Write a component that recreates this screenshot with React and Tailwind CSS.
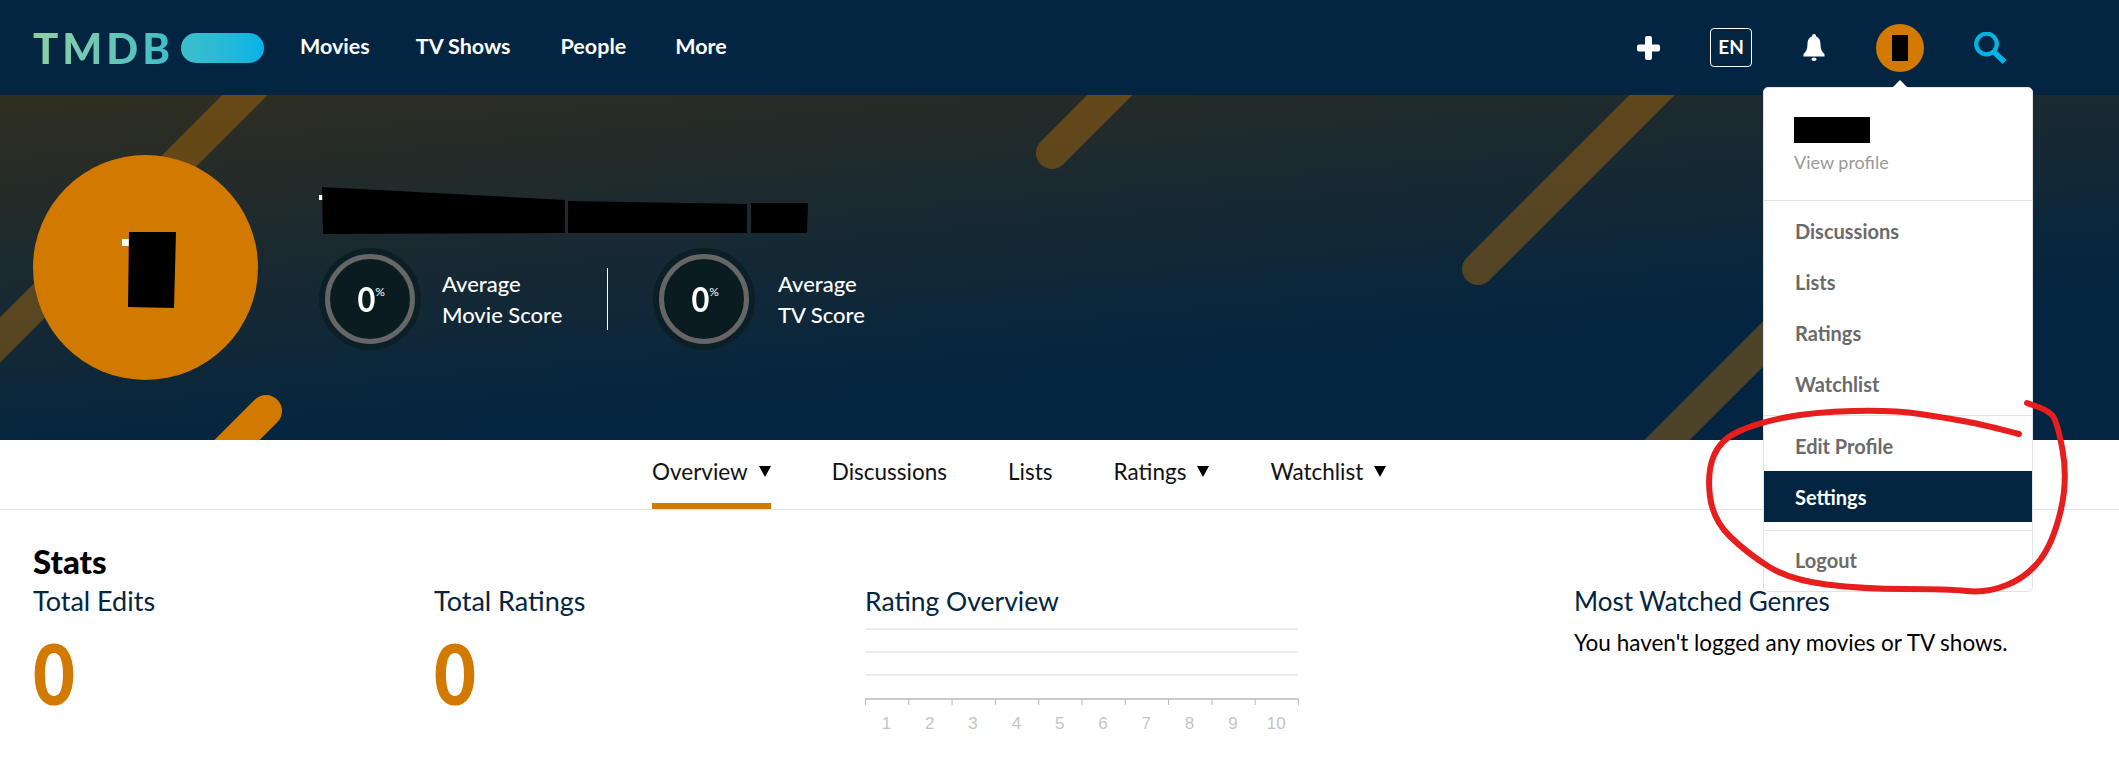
const font = { fontFamily: '"Lato", "Noto Sans", sans-serif' };

// freehand circle over the menu
const scribble = [
  [2019, 434], [1985, 425], [1947, 418], [1893, 410], [1813, 412], [1757, 423], [1720, 440], [1707, 473],
  [1713, 520], [1747, 553], [1790, 580], [1863, 589], [1947, 589], [1987, 593], [2027, 577], [2053, 543],
  [2068, 480], [2057, 420], [2047, 410], [2027, 403],
];

function smooth(pts) {
  let d = `M${pts[0][0]} ${pts[0][1]}`;
  for (let i = 1; i < pts.length - 1; i++) {
    const mx = (pts[i][0] + pts[i + 1][0]) / 2;
    const my = (pts[i][1] + pts[i + 1][1]) / 2;
    d += ` Q${pts[i][0]} ${pts[i][1]} ${mx} ${my}`;
  }
  const last = pts[pts.length - 1];
  return d + ` L${last[0]} ${last[1]}`;
}

function HeroStripes() {
  return (
    <svg className="absolute inset-0" width="2119" height="345" viewBox="0 95 2119 345">
      <g stroke="#d27900" strokeOpacity="0.36" strokeWidth="32" strokeLinecap="round" fill="none">
        <line x1="275" y1="65" x2="-30" y2="370" />
        <line x1="1140" y1="65" x2="1052" y2="153" />
        <line x1="1682" y1="65" x2="1478" y2="269" />
        <line x1="1900" y1="207" x2="1620" y2="487" />
      </g>
      <line x1="2045" y1="70" x2="2015" y2="100" stroke="#d27900" strokeWidth="12" />
      <line x1="266" y1="411" x2="220" y2="457" stroke="#d27900" strokeWidth="32" strokeLinecap="round" />
    </svg>
  );
}

function ScoreBadge() {
  return (
    <div className="h-[102px] w-[102px] shrink-0 rounded-full bg-[#0c1f26] p-[6px]">
      <div className="flex h-full w-full items-center justify-center rounded-full border-[5px] border-[#666666] bg-[#0b1c21] text-white">
        <span className="origin-right scale-x-[0.88] text-[35px] leading-none font-bold">0</span>
        <span className="mb-[14px] text-[12px] leading-none">%</span>
      </div>
    </div>
  );
}

function ScoreLabel({ a, b, className }) {
  return (
    <div className={`text-[22px] leading-[31px] font-medium text-white ${className}`}>
      <div>{a}</div>
      <div>{b}</div>
    </div>
  );
}

function Caret() {
  return <span className="mb-[2px] ml-[11px] h-0 w-0 border-x-[6px] border-t-[11px] border-x-transparent border-t-black" />;
}

function Tab({ label, caret, active }) {
  return (
    <div className={`flex h-[69px] items-center pt-[1px] ${active ? "border-b-[6px] border-[#d27900]" : "pb-[6px]"}`}>
      <span>{label}</span>
      {caret && <Caret />}
    </div>
  );
}

function MenuItem({ label, active }) {
  return (
    <div
      className={`flex h-[51px] items-center pl-[31px] text-[20px] font-bold ${
        active ? "bg-[#032541] text-white" : "text-[#6a6a6a]"
      }`}
    >
      {label}
    </div>
  );
}

function Menu() {
  return (
    <div className="absolute top-[87px] right-[86px] w-[270px] rounded-[5px] border border-[#e3e3e3] bg-white">
      <div className="absolute -top-[8px] left-[128px] h-0 w-0 border-x-[8px] border-b-[8px] border-x-transparent border-b-white" />
      <div className="h-[112px] pt-[29px] pl-[30px]">
        <div className="h-[26px] w-[76px] bg-black" />
        <div className="mt-[7px] text-[18px] leading-[24px] text-[#999999]">View profile</div>
      </div>
      <div className="h-[215px] border-t border-[#e3e3e3] pt-[4px]">
        <MenuItem label="Discussions" />
        <MenuItem label="Lists" />
        <MenuItem label="Ratings" />
        <MenuItem label="Watchlist" />
      </div>
      <div className="border-t border-[#e3e3e3] pt-[4px] pb-[8px]">
        <MenuItem label="Edit Profile" />
        <MenuItem label="Settings" active />
      </div>
      <div className="h-[61px] border-t border-[#e3e3e3] pt-[3px]">
        <MenuItem label="Logout" />
      </div>
    </div>
  );
}

function Nav() {
  return (
    <div className="flex h-[95px] items-center bg-[#032541] pr-[112px] pl-[33px]">
      <span className="w-[136px] bg-gradient-to-r from-[#90cea1] to-[#3cbec9] bg-clip-text text-[42px] leading-none font-black tracking-[4px] text-transparent">
        TMDB
      </span>
      <div className="ml-[12px] h-[30px] w-[83px] rounded-full bg-gradient-to-r from-[#3cbec9] to-[#00b3e5]" />
      <div className="ml-[36px] flex items-center gap-[46px] pb-[2px] text-[21.5px] font-bold text-white">
        <span>Movies</span>
        <span>TV Shows</span>
        <span className="ml-[4px]">People</span>
        <span className="ml-[3px]">More</span>
      </div>
      <div className="ml-auto flex items-center gap-[51px]">
        <svg className="-mr-[1px]" width="23" height="24" viewBox="0 0 23 24" fill="white">
          <rect x="8" y="0" width="7" height="24" rx="2" />
          <rect x="0" y="8.5" width="23" height="7" rx="2" />
        </svg>
        <div className="flex h-[39px] w-[42px] items-center justify-center rounded-[4px] border border-white text-[19px] font-bold text-white">
          EN
        </div>
        <svg width="22" height="27" viewBox="0 0 22 27" fill="white">
          <circle cx="11" cy="2" r="2" />
          <path d="M11 2C6.5 2 4.5 6 4.5 10C4.5 15 3 18 0.5 20V22.5H21.5V20C19 18 17.5 15 17.5 10C17.5 6 15.5 2 11 2Z" />
          <ellipse cx="11" cy="25.3" rx="2.6" ry="1.7" />
        </svg>
        <div className="-mr-[1px] flex h-[48px] w-[48px] items-center justify-center rounded-full bg-[#d27900]">
          <div className="h-[26px] w-[16px] bg-black" />
        </div>
        <svg width="33" height="32" viewBox="0 0 33 32" fill="none" stroke="#01b4e4">
          <circle cx="12.5" cy="12" r="10.3" strokeWidth="4.2" />
          <line x1="20" y1="20" x2="30.5" y2="30" strokeWidth="5.5" />
        </svg>
      </div>
    </div>
  );
}

function Hero() {
  return (
    <div className="relative flex h-[345px] items-center overflow-hidden bg-[linear-gradient(175deg,#302e20_0%,#032541_72%)] pl-[33px]">
      <HeroStripes />
      <div className="relative flex h-[225px] w-[225px] shrink-0 items-center justify-center rounded-full bg-[#d27900]">
        <svg className="mt-[5px] ml-[7px]" width="54" height="76" viewBox="122 232 54 76">
          <rect x="122" y="239" width="8" height="7" fill="white" />
          <polygon points="129,232 176,232 174,308 128,307" fill="black" />
        </svg>
      </div>
      <div className="relative ml-[61px] pt-[1px]">
        <svg className="block" width="490" height="47" viewBox="319 187 490 47">
          <rect x="319" y="195" width="4" height="5" fill="white" />
          <polygon points="322,187 565,200 565,233 323,234" fill="black" />
          <polygon points="568,201 747,204 747,233 568,233" fill="black" />
          <polygon points="751,203 808,203 807,233 751,233" fill="black" />
        </svg>
        <div className="mt-[14px] flex items-center">
          <ScoreBadge />
          <ScoreLabel a="Average" b="Movie Score" className="ml-[21px] w-[165px]" />
          <div className="h-[62px] w-px bg-white" />
          <div className="ml-[45px]">
            <ScoreBadge />
          </div>
          <ScoreLabel a="Average" b="TV Score" className="ml-[23px]" />
        </div>
      </div>
    </div>
  );
}

function Tabs() {
  return (
    <div className="flex h-[70px] gap-[61px] border-b-[1px] border-[#e3e3e3] pl-[652px] text-[22.5px] text-[#111111]">
      <Tab label="Overview" caret active />
      <Tab label="Discussions" />
      <Tab label="Lists" />
      <Tab label="Ratings" caret />
      <Tab label="Watchlist" caret />
    </div>
  );
}

function Total({ title, width }) {
  return (
    <div style={{ width }} className="shrink-0">
      <div className="text-[27px] leading-[40px] text-[#032541]">{title}</div>
      <div className="mt-[7px] origin-left scale-x-[0.86] text-[84px] leading-[90px] font-black text-[#d27900]">0</div>
    </div>
  );
}

function RatingChart() {
  const ticks = Array.from({ length: 11 }, (_, i) => 0.5 + i * 43.3);
  return (
    <svg className="mt-[3px] block" width="434" height="110" viewBox="0 0 434 110">
      {[5, 28, 51].map((y) => (
        <line key={y} x1="0" y1={y} x2="433" y2={y} stroke="#e6e6e6" strokeWidth="1.5" />
      ))}
      <line x1="0" y1="75" x2="433.5" y2="75" stroke="#b8b8b8" strokeWidth="1.5" />
      {ticks.map((x) => (
        <line key={x} x1={x} y1="75" x2={x} y2="81" stroke="#b8b8b8" />
      ))}
      {ticks.slice(0, 10).map((x, i) => (
        <text
          key={x}
          x={x + 21}
          y="105"
          textAnchor="middle"
          fill="#c4c4c4"
          fontSize="17"
          fontFamily='"Liberation Sans", sans-serif'
        >
          {i + 1}
        </text>
      ))}
    </svg>
  );
}

function Stats() {
  return (
    <div className="pt-[31px] pl-[33px]">
      <div className="text-[33px] leading-[40px] font-black text-black">Stats</div>
      <div className="flex">
        <Total title="Total Edits" width={401} />
        <Total title="Total Ratings" width={431} />
        <div className="w-[709px] shrink-0">
          <div className="text-[26.5px] leading-[40px] text-[#032541]">Rating Overview</div>
          <RatingChart />
        </div>
        <div>
          <div className="text-[26px] leading-[40px] text-[#032541]">Most Watched Genres</div>
          <div className="mt-[2px] text-[22.5px] leading-[40px] text-black">You haven't logged any movies or TV shows.</div>
        </div>
      </div>
    </div>
  );
}

export default function App() {
  return (
    <div style={font} className="relative h-[760px] overflow-hidden bg-white">
      <Nav />
      <Hero />
      <Tabs />
      <Stats />
      <Menu />
      <svg className="pointer-events-none absolute inset-0" width="2119" height="760" viewBox="0 0 2119 760">
        <path d={smooth(scribble)} fill="none" stroke="#e61e1e" strokeWidth="6" strokeLinecap="round" strokeLinejoin="round" />
      </svg>
    </div>
  );
}
